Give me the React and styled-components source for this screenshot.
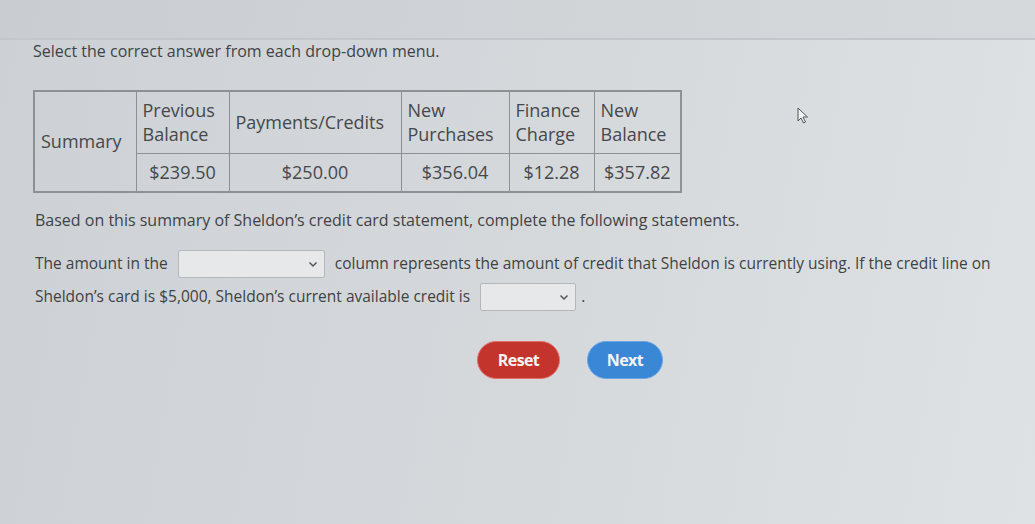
import React from 'react';
import styled, { createGlobalStyle } from 'styled-components';

const GlobalStyle = createGlobalStyle`
  html, body {
    margin: 0;
    padding: 0;
  }
  body {
    font-family: "Open Sans", "Liberation Sans", sans-serif;
    color: #3f4244;
    background: linear-gradient(100deg, #cdd1d5 0%, #d6d9dc 55%, #dfe2e4 100%);
  }
`;

const Page = styled.div`
  width: 1035px;
  height: 524px;
  overflow: hidden;
  position: relative;
`;

const TopBar = styled.div`
  height: 38px;
  background: linear-gradient(100deg, #c9cdd1 0%, #d2d5d8 60%, #d6d9db 100%);
  border-bottom: 2px solid #c3c7cb;
`;

const Content = styled.div`
  padding: 0 0 0 33px;
`;

const Instruction = styled.p`
  margin: 0;
  font-size: 16px;
  line-height: 22px;
  color: #404346;
`;

const Table = styled.table`
  margin-top: 28px;
  border-collapse: collapse;
  border: 2px solid #8d9194;
  font-size: 18px;
  color: #45484b;
`;

const Head = styled.td`
  border: 1.5px solid #8d9194;
  padding: 2px 6px;
  height: 62px;
  width: ${p => p.w}px;
  line-height: 24px;
  text-align: left;
  vertical-align: middle;
  box-sizing: border-box;
`;

const Cell = styled.td`
  border: 1.5px solid #8d9194;
  height: 37px;
  padding: 0 6px;
  text-align: center;
  font-size: 18px;
`;

const Lead = styled.p`
  margin: 16px 0 0 2px;
  font-size: 16px;
  line-height: 22px;
`;

const Statement = styled.p`
  margin: 16px 0 0 2px;
  width: 990px;
  font-size: 15.5px;
  line-height: 33px;
`;

const Select = styled.span`
  display: inline-flex;
  align-items: center;
  justify-content: flex-end;
  box-sizing: border-box;
  width: ${p => p.w}px;
  height: 28px;
  margin: 0 ${p => p.after ?? 10}px 0 10px;
  padding-right: 6px;
  vertical-align: middle;
  border: 1px solid #b4b8bb;
  border-radius: 2px;
  background: #e6e8ea;
`;

const Buttons = styled.div`
  display: flex;
  gap: 27px;
  margin: 28px 0 0 444px;
`;

const Button = styled.button`
  width: ${p => p.w}px;
  height: 38px;
  border-radius: 19px;
  border: 1px solid ${p => p.edge};
  background: ${p => p.bg};
  color: #f4f4f4;
  font-family: "Open Sans", "Liberation Sans", sans-serif;
  font-weight: 700;
  font-size: 16px;
  letter-spacing: -0.6px;
  cursor: pointer;
`;

const Pointer = styled.svg`
  position: absolute;
  left: 797px;
  top: 107px;
`;

const Chevron = () => (
  <svg width="10" height="7" viewBox="0 0 10 7">
    <path d="M1.5 1.5 L5 5 L8.5 1.5" fill="none" stroke="#555" strokeWidth="1.5" />
  </svg>
);

export default function App() {
  return (
    <Page>
      <GlobalStyle />
      <TopBar />
      <Content>
        <Instruction>Select the correct answer from each drop-down menu.</Instruction>
        <Table>
          <tbody>
            <tr>
              <Head w={102} rowSpan={2}>Summary</Head>
              <Head w={93}>Previous Balance</Head>
              <Head w={172}>Payments/Credits</Head>
              <Head w={108}>New Purchases</Head>
              <Head w={85}>Finance Charge</Head>
              <Head w={87}>New Balance</Head>
            </tr>
            <tr>
              <Cell>$239.50</Cell>
              <Cell>$250.00</Cell>
              <Cell>$356.04</Cell>
              <Cell>$12.28</Cell>
              <Cell>$357.82</Cell>
            </tr>
          </tbody>
        </Table>
        <Lead>Based on this summary of Sheldon’s credit card statement, complete the following statements.</Lead>
        <Statement>
          The amount in the
          <Select w={147}><Chevron /></Select>
          column represents the amount of credit that Sheldon is currently using. If the credit line on
          <br />
          Sheldon’s card is $5,000, Sheldon’s current available credit is
          <Select w={96} after={5}><Chevron /></Select>.
        </Statement>
        <Buttons>
          <Button w={83} bg="#c3342c" edge="#e0706a">Reset</Button>
          <Button w={76} bg="#3a87d6" edge="#6aa7e4">Next</Button>
        </Buttons>
      </Content>
      <Pointer width="12" height="17" viewBox="0 0 12 17">
        <path d="M1 1 L1 14 L4 11 L6.5 16 L8.5 15 L6 10 L10.5 10 Z" fill="#eef0f1" stroke="#555" strokeWidth="1" />
      </Pointer>
    </Page>
  );
}
